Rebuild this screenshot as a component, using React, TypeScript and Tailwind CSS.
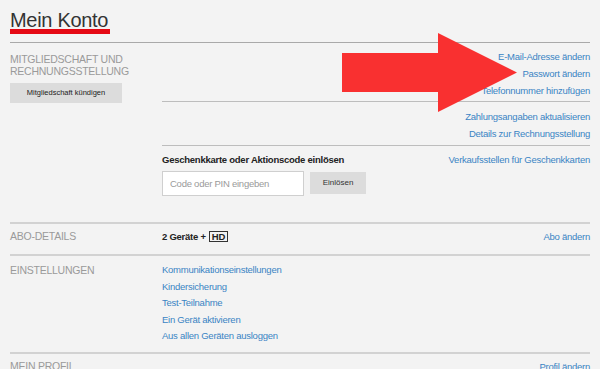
export default function App() {
  const link = "text-[#3a84c4]";
  const heading = "text-[10.5px] text-[#9a9a9a] tracking-[-0.25px]";
  return (
    <div className="relative w-[600px] h-[369px] overflow-hidden bg-[#f3f3f3] px-[10px] font-['Liberation_Sans',Arial,sans-serif] text-[9.5px] tracking-[-0.25px] text-[#222]">
      <div className="pt-[10px] pb-[8px]">
        <h1 className="text-[20px] leading-[21px] tracking-[-0.3px] text-[#333]">Mein Konto</h1>
        <div className="mt-[-2px] h-[5px] w-[100px] bg-[#e50914]" />
      </div>

      {/* Mitgliedschaft */}
      <section className="flex border-t border-[#a9a9a9]">
        <div className="w-[152px] shrink-0 pt-[10px]">
          <h2 className={`${heading} leading-[12px]`}>
            MITGLIEDSCHAFT UND
            <br />
            RECHNUNGSSTELLUNG
          </h2>
          <button className="mt-[6px] flex h-[20px] w-[112px] items-center justify-center bg-[#dcdcdc] text-[7.5px] tracking-normal text-[#222]">
            Mitgliedschaft kündigen
          </button>
        </div>
        <div className="flex-1">
          <div className="flex flex-col items-end border-b border-[#bdbdbd] pt-[5px] pb-[2px] leading-[17px]">
            <span className={link}>E-Mail-Adresse ändern</span>
            <span className={link}>Passwort ändern</span>
            <span className={link}>Telefonnummer hinzufügen</span>
          </div>
          <div className="flex flex-col items-end border-b border-[#bdbdbd] pt-[6px] pb-[3px] leading-[17px]">
            <span className={link}>Zahlungsangaben aktualisieren</span>
            <span className={link}>Details zur Rechnungsstellung</span>
          </div>
          <div className="flex justify-between pt-[7px] pb-[26px]">
            <div>
              <div className="font-bold leading-[13px] text-[#222]">Geschenkkarte oder Aktionscode einlösen</div>
              <div className="mt-[5px] flex gap-[6px]">
                <input
                  className="h-[25px] w-[142px] border border-[#cfcfcf] bg-white px-[7px] text-[9.5px] tracking-[-0.25px] text-[#333] placeholder:text-[#9a9a9a] outline-none"
                  placeholder="Code oder PIN eingeben"
                />
                <button className="mt-[1px] flex h-[22px] w-[56px] items-center justify-center bg-[#dcdcdc] text-[8px] tracking-normal text-[#333]">
                  Einlösen
                </button>
              </div>
            </div>
            <span className={`${link} leading-[13px]`}>Verkaufsstellen für Geschenkkarten</span>
          </div>
        </div>
      </section>

      {/* Abo-Details */}
      <section className="flex border-t-2 border-[#d2d2d2] pt-[4px] pb-[9px] leading-[17px]">
        <h2 className={`${heading} w-[152px] shrink-0 leading-[17px]`}>ABO-DETAILS</h2>
        <div className="flex flex-1 items-center justify-between">
          <span className="flex items-center font-bold text-[#222]">
            2 Geräte +
            <span className="ml-[3px] inline-block border-[1.5px] border-[#333] px-[2px] text-[9.5px] leading-[9px] tracking-normal">HD</span>
          </span>
          <span className={link}>Abo ändern</span>
        </div>
      </section>

      {/* Einstellungen */}
      <section className="flex border-t-2 border-[#d2d2d2] pt-[6px] pb-[7px]">
        <h2 className={`${heading} w-[152px] shrink-0 leading-[16.5px]`}>EINSTELLUNGEN</h2>
        <div className="flex flex-1 flex-col items-start leading-[16.5px]">
          <span className={link}>Kommunikationseinstellungen</span>
          <span className={link}>Kindersicherung</span>
          <span className={link}>Test-Teilnahme</span>
          <span className={link}>Ein Gerät aktivieren</span>
          <span className={link}>Aus allen Geräten ausloggen</span>
        </div>
      </section>

      {/* Mein Profil */}
      <section className="flex border-t-2 border-[#d2d2d2] pt-[4px]">
        <h2 className={`${heading} w-[152px] shrink-0 leading-[17px]`}>MEIN PROFIL</h2>
        <div className="flex flex-1 justify-end leading-[17px]">
          <span className={link}>Profil ändern</span>
        </div>
      </section>

      {/* Red arrow annotation */}
      <svg
        className="pointer-events-none absolute left-0 top-0"
        width="600"
        height="369"
        viewBox="0 0 600 369"
      >
        <polygon
          points="342,53 438,53 438,33 517,72.5 438,112 438,92 342,92"
          fill="#f93030"
        />
      </svg>
    </div>
  );
}
